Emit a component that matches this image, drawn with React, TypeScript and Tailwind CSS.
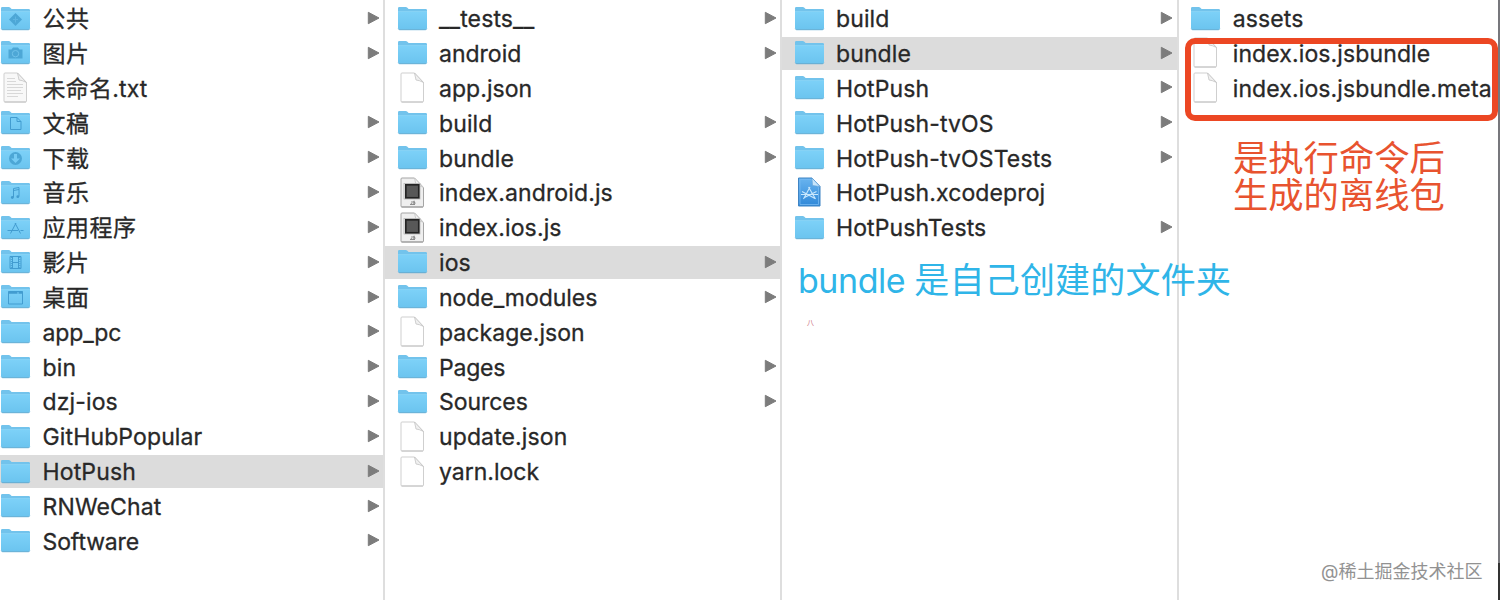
import type { ReactNode } from "react";

type Kind =
  | "folder" | "public" | "pictures" | "documents" | "downloads" | "music"
  | "apps" | "movies" | "desktop" | "text" | "file" | "script" | "xcode";

type Entry = { name: string; kind?: Kind; arrow?: boolean; selected?: boolean; cls?: string };

const emblems: Partial<Record<Kind, ReactNode>> = {
  public: (
    <>
      <path d="M15.500 7 22 13.500 15.500 20 9 13.500Z" fill="#4da7d6" stroke="none" />
      <path d="M15.500 10.500v6M13 13.500h5" stroke="#5fb5e2" />
    </>
  ),
  pictures: (
    <>
      <path d="M8.500 9.500h3l1.500-2h5l1.500 2h3v9h-14z" fill="#4da7d6" stroke="none" />
      <circle cx="15.500" cy="13.700" r="3.200" stroke="#70c2ea" />
    </>
  ),
  documents: <path d="M10.500 7.500h6.500l4 4v8h-10.500zM17 7.500v4h4" />,
  downloads: (
    <>
      <circle cx="15.500" cy="13.500" r="6.500" fill="#4da7d6" stroke="none" />
      <path d="M14 9h3v4.500h3l-4.500 4.500-4.500-4.500h3z" fill="#76cbf4" stroke="none" />
    </>
  ),
  music: (
    <>
      <path d="M13.500 17.500V8.500l5.500-1v9M13.500 10.500l5.500-1" />
      <circle cx="12.300" cy="17.500" r="1.400" fill="#429cd0" stroke="none" />
      <circle cx="17.800" cy="16.700" r="1.400" fill="#429cd0" stroke="none" />
    </>
  ),
  apps: <path d="M16 8 10.500 18.500M15 8l5.500 10.500M7.500 15.500h10.500M20.500 15.500h3" />,
  movies: (
    <>
      <path d="M10 7.500h11v12h-11z" />
      <path d="M12.500 7.500v12M18.500 7.500v12M12.500 13.500h6" />
      <path d="M11.300 8v12M19.800 8v12" strokeDasharray="1 1" />
    </>
  ),
  desktop: (
    <>
      <path d="M8.500 7.500h14v12.500H8.500z" />
      <path d="M8.500 8.500h14" strokeWidth="2.500" strokeDasharray="9 1" />
    </>
  ),
};

function Folder({ kind }: { kind: Kind }) {
  return (
    <svg className="block h-[25px] w-[31px]" viewBox="0 0 31 25" fill="none">
      <path d="M1 21V2.300Q1 1 2.300 1h6.400q1 0 1.700.8L11.600 3H28.700Q30 3 30 4.300V21z" fill="#72c3ec" />
      <path d="M1 5.500h29V22q0 1.500-1.500 1.500h-26Q1 23.500 1 22z" fill="url(#front)" />
      <path d="M1 5.500h29" stroke="#86d2f5" />
      <path d="M1.300 22.800q.5.900 1.400.9h25.600q1 0 1.500-.9" stroke="#5aa9d2" />
      <g stroke="#429cd0" strokeWidth="1">{emblems[kind]}</g>
    </svg>
  );
}

function Sheet({ kind }: { kind: Kind }) {
  const script = kind === "script";
  return (
    <svg className="block h-[31px] w-[26px]" viewBox="0 0 26 31" fill="none">
      <path d="M2 2Q2 1 3 1H15.500L24.500 10.500V29q0 1-1 1H3Q2 30 2 29z" fill={script ? "#efefef" : kind === "text" ? "#f8f8f8" : "#fff"} stroke={script ? "#a5a5a5" : "#cfcfcf"} strokeLinejoin="round" />
      <path d="M2.500 30h21.500" stroke={script ? "#8e8e8e" : "#bcbcbc"} strokeWidth=".8" />
      <path d="M15.500 1 17 8q3.500.3 7.500 2.500z" fill="#f0f0f0" stroke="#c4c4c4" strokeLinejoin="round" strokeWidth=".8" />
      {script && (
        <>
          <rect x="5" y="6.500" width="16" height="15.500" fill="#fbfbfb" stroke="#b0b0b0" strokeWidth=".7" />
          <rect x="6.800" y="7.800" width="13" height="13" fill="#585858" stroke="#242424" strokeWidth="1.700" />
          <path d="M13 24v2q0 1-1.300.8M16 24.300h-1.500v1.200H16v1.300h-2M11 27.500h5" stroke="#777" strokeWidth=".8" />
        </>
      )}
      {kind === "text" && <path d="M5 6.500h8M5 9.500h9M5 12.500h16M5 15.500h16M5 18.500h14M5 21.500h16M5 24.500h11" stroke="#d8d8d8" />}
    </svg>
  );
}

function Xcode() {
  return (
    <svg className="block h-[31px] w-[26px]" viewBox="0 0 26 31" fill="none">
      <path d="M2.500 1h13.500l8 8.500v19.500h-21.500z" fill="url(#xcode)" stroke="#3f84c4" />
      <path d="M4 2.500h11l7.500 8V27.500H4z" stroke="#75b9f2" strokeWidth=".8" />
      <path d="M16 1l.5 7.500 7.500 1z" fill="#c7e5fb" stroke="#5e9fd5" strokeWidth=".6" />
      <path d="M14 10 7.500 22M12.500 10 19.500 22M5 17.500h17M6 14.500l13 7M20.500 14.500l-12 6" stroke="#c9e8fd" strokeWidth="1.100" />
    </svg>
  );
}

function Row({ name, kind = "folder", arrow, selected, cls = "tracking-[0.120px]" }: Entry) {
  const sheet = kind === "text" || kind === "file" || kind === "script";
  return (
    <div className={`flex h-[32.700px] shrink-0 items-center ${selected ? "bg-[#dcdcdc]" : ""}`}>
      <div className="flex w-[42.600px] shrink-0 pb-[1px] pl-[0.250px]">
        {sheet ? <div className="pl-[2px]"><Sheet kind={kind} /></div> : kind === "xcode" ? <div className="pl-[2px]"><Xcode /></div> : <Folder kind={kind} />}
      </div>
      <span className={`flex-1 pt-[1.300px] whitespace-nowrap leading-[32px] ${cls}`}>{name}</span>
      {arrow && (
        <svg className="mr-[3.400px] mb-[1.500px] h-[14px] w-[13px] shrink-0" viewBox="0 0 13 14">
          <path d="M1.300 1.300v11.400L12 7z" fill="#7c7c7c" stroke="#7c7c7c" strokeLinejoin="round" />
        </svg>
      )}
    </div>
  );
}

function Column({ entries, className }: { entries: Entry[]; className: string }) {
  return (
    <div className={`flex h-full shrink-0 flex-col gap-[2.170px] pt-[2.200px] [-webkit-text-stroke:0.300px_#282828] ${className}`}>
      {entries.map((e) => <Row key={e.name} {...e} />)}
    </div>
  );
}

const cjk = "tracking-[0.500px]";

const home: Entry[] = [
  { name: "公共", kind: "public", arrow: true, cls: cjk },
  { name: "图片", kind: "pictures", arrow: true, cls: cjk },
  { name: "未命名.txt", kind: "text", cls: "tracking-[0.180px]" },
  { name: "文稿", kind: "documents", arrow: true, cls: cjk },
  { name: "下载", kind: "downloads", arrow: true, cls: cjk },
  { name: "音乐", kind: "music", arrow: true, cls: cjk },
  { name: "应用程序", kind: "apps", arrow: true, cls: cjk },
  { name: "影片", kind: "movies", arrow: true, cls: cjk },
  { name: "桌面", kind: "desktop", arrow: true, cls: cjk },
  { name: "app_pc", arrow: true, cls: "tracking-[-0.150px]" },
  { name: "bin", arrow: true },
  { name: "dzj-ios", arrow: true },
  { name: "GitHubPopular", arrow: true },
  { name: "HotPush", arrow: true, selected: true },
  { name: "RNWeChat", arrow: true },
  { name: "Software", arrow: true, cls: "tracking-[-0.150px]" },
];

const project: Entry[] = [
  { name: "__tests__", arrow: true },
  { name: "android", arrow: true, cls: "tracking-[0px]" },
  { name: "app.json", kind: "file", cls: "tracking-[0.050px]" },
  { name: "build", arrow: true },
  { name: "bundle", arrow: true },
  { name: "index.android.js", kind: "script" },
  { name: "index.ios.js", kind: "script" },
  { name: "ios", arrow: true, selected: true },
  { name: "node_modules", arrow: true, cls: "tracking-[-0.050px]" },
  { name: "package.json", kind: "file", cls: "tracking-[0.050px]" },
  { name: "Pages", arrow: true, cls: "tracking-[-0.200px]" },
  { name: "Sources", arrow: true, cls: "tracking-[-0.050px]" },
  { name: "update.json", kind: "file" },
  { name: "yarn.lock", kind: "file", cls: "tracking-[0px]" },
];

const ios: Entry[] = [
  { name: "build", arrow: true },
  { name: "bundle", arrow: true, selected: true },
  { name: "HotPush", arrow: true },
  { name: "HotPush-tvOS", arrow: true },
  { name: "HotPush-tvOSTests", arrow: true },
  { name: "HotPush.xcodeproj", kind: "xcode" },
  { name: "HotPushTests", arrow: true },
];

const bundle: Entry[] = [
  { name: "assets" },
  { name: "index.ios.jsbundle", kind: "file" },
  { name: "index.ios.jsbundle.meta", kind: "file" },
];

export default function App() {
  return (
    <div className="relative flex h-[600px] w-[1500px] overflow-hidden bg-white font-['Inter','Noto_Sans_CJK_SC',sans-serif] text-[23px] font-normal text-[#282828]">
      <svg className="absolute h-0 w-0">
        <defs>
          <linearGradient id="front" x1="0" y1="0" x2="0" y2="1">
            <stop stopColor="#7dd1f8" />
            <stop offset="1" stopColor="#6bc4ef" />
          </linearGradient>
          <linearGradient id="xcode" x1="0" y1="0" x2="0" y2="1">
            <stop stopColor="#69b4ef" />
            <stop offset="1" stopColor="#2f88d8" />
          </linearGradient>
        </defs>
      </svg>
      <Column entries={home} className="w-[383px]" />
      <div className="w-[2px] shrink-0 bg-[#dedede]" />
      <Column entries={project} className="w-[395px] [&>div]:pl-[11.400px]" />
      <div className="w-[2px] shrink-0 bg-[#dedede]" />
      <Column entries={ios} className="w-[394.500px] [&>div]:pl-[11.400px]" />
      <div className="w-[2px] shrink-0 bg-[#dedede]" />
      <Column entries={bundle} className="w-[319.500px] [&>div]:pl-[11.600px]" />
      <div className="flex w-[2px] shrink-0 flex-col">
        <div className="h-[563px] bg-[#77777c]" />
        <div className="flex-1 bg-[#333]" />
      </div>
      <div className="absolute top-[38px] left-[1185px] h-[83px] w-[313px] rounded-[10px] border-[6px] border-[#ec4723]" />
      <div className="absolute top-[141px] left-[1233px] flex flex-col text-[35.300px] leading-[36.500px] whitespace-nowrap text-[#e8532f]">
        <span>是执行命令后</span>
        <span>生成的离线包</span>
      </div>
      <div className="absolute top-[260px] left-[798px] text-[35px] leading-[40px] whitespace-nowrap text-[#2fb5e8]">
        <span className="text-[34px] tracking-[-0.450px]">bundle </span>
        <span className="tracking-[0.200px]">是自己创建的文件夹</span>
      </div>
      <div className="absolute top-[316px] left-[807px] text-[7px] leading-[14px] text-[#c96a78]">八</div>
      <div className="absolute top-[559px] left-[1321px] text-[18px] leading-[26px] whitespace-nowrap text-[#929292]">@稀土掘金技术社区</div>
    </div>
  );
}
